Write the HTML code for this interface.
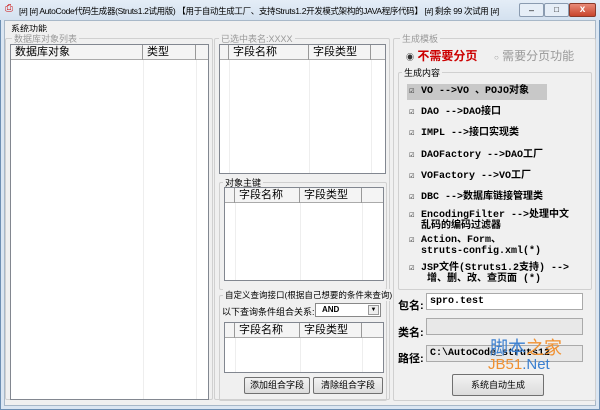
<!DOCTYPE html>
<html><head><meta charset="utf-8"><style>
*{margin:0;padding:0;box-sizing:border-box}
body{width:600px;height:410px;background:#6a9bc4;font-family:"Liberation Sans","Noto Sans CJK SC",sans-serif;font-size:10px;color:#000;position:relative;overflow:hidden}
.a{position:absolute}
.win{left:0;top:0;width:600px;height:410px;background:#dbe6f2;border:1px solid #6d8fb3}
.client{left:4px;top:20px;width:592px;height:386px;background:#f0f0f0;border:1px solid #a8b8c8}
.grp{position:absolute;border:1px solid #d0d0d0;border-radius:2px}
.gl{position:absolute;top:-7px;left:6px;background:#f0f0f0;padding:0 2px;font-size:9px;color:#999;white-space:nowrap}
.tbl{position:absolute;background:#fff;border:1px solid #828790;overflow:hidden}
.hdr{position:absolute;top:0;left:0;right:0;height:15px;background:#f4f4f4;border-bottom:1px solid #aaa}
.hc{position:absolute;top:0;height:15px;border-right:1px solid #999;font-size:11px;padding-left:4px;line-height:14px;white-space:nowrap}
.vl{position:absolute;top:15px;bottom:0;border-left:1px solid #eee}
.btn{position:absolute;border:1px solid #707070;background:linear-gradient(#f2f2f2,#dcdcdc);font-size:9px;text-align:center;line-height:15px;border-radius:2px}
.it{position:absolute;left:10px;font-family:"Liberation Mono","Noto Sans CJK SC",monospace;font-weight:bold;font-size:10px;white-space:nowrap;line-height:11px}
.cb{display:inline-block;width:8px;font-size:9px;margin-right:4px;font-weight:bold;color:#333}
.inp{position:absolute;left:426px;width:157px;height:17px;border:1px solid #aaa;font-family:"Liberation Mono",monospace;font-weight:bold;font-size:10px;padding-left:3px;line-height:15px}
.lab{position:absolute;left:398px;font-size:11px;font-weight:bold}
</style></head><body>
<div class="a win"></div>
<div class="a" style="left:0;top:0;width:600px;height:20px;background:linear-gradient(#e4edf7,#d4e1ef)"></div>
<div class="a" style="left:5px;top:4px;width:10px;height:10px;color:#c00;font-size:10px;line-height:10px">⎙</div>
<div class="a" style="left:19px;top:5px;font-size:8.5px;letter-spacing:-0.35px;white-space:nowrap">[#] [#] AutoCode代码生成器(Struts1.2试用版) 【用于自动生成工厂、支持Struts1.2开发模式架构的JAVA程序代码】 [#] 剩余 99 次试用 [#]</div>
<div class="a" style="left:519px;top:3px;width:25px;height:14px;border:1px solid #8a9bb0;border-radius:2px;background:#e6eef7;text-align:center;font-size:9px;line-height:12px">–</div>
<div class="a" style="left:544px;top:3px;width:25px;height:14px;border:1px solid #8a9bb0;border-radius:2px;background:#e6eef7;text-align:center;font-size:8px;line-height:12px">□</div>
<div class="a" style="left:569px;top:3px;width:27px;height:14px;border:1px solid #8a3a2a;border-radius:2px;background:linear-gradient(#e88a78,#c8452c);color:#fff;text-align:center;font-size:10px;font-weight:bold;line-height:12px">x</div>
<div class="a client"></div>
<div class="a" style="left:5px;top:21px;width:590px;height:12px;background:#f0f0f0"></div>
<div class="a" style="left:11px;top:22px;font-size:9px">系统功能</div>

<!-- left -->
<div class="grp" style="left:5px;top:38px;width:208px;height:362px"><div class="gl">数据库对象列表</div></div>
<div class="tbl" style="left:10px;top:44px;width:199px;height:356px">
<div class="hdr"></div>
<div class="hc" style="left:0;width:132px">数据库对象</div>
<div class="hc" style="left:132px;width:53px">类型</div>
<div class="vl" style="left:132px"></div><div class="vl" style="left:185px"></div>
</div>

<!-- middle top -->
<div class="grp" style="left:214px;top:38px;width:176px;height:362px"></div>
<div class="a" style="left:219px;top:32px;font-size:9px;color:#999;background:#f0f0f0;padding:0 2px">已选中表名:XXXX</div>
<div class="tbl" style="left:219px;top:44px;width:167px;height:130px">
<div class="hdr"></div>
<div class="hc" style="left:0;width:9px"></div>
<div class="hc" style="left:9px;width:80px">字段名称</div>
<div class="hc" style="left:89px;width:62px">字段类型</div>
<div class="vl" style="left:9px"></div><div class="vl" style="left:89px"></div><div class="vl" style="left:151px"></div>
</div>

<div class="grp" style="left:219px;top:182px;width:168px;height:108px"><div class="gl" style="color:#000;left:3px">对象主键</div></div>
<div class="tbl" style="left:224px;top:187px;width:160px;height:94px">
<div class="hdr"></div>
<div class="hc" style="left:0;width:10px"></div>
<div class="hc" style="left:10px;width:65px">字段名称</div>
<div class="hc" style="left:75px;width:62px">字段类型</div>
<div class="vl" style="left:10px"></div><div class="vl" style="left:75px"></div><div class="vl" style="left:137px"></div>
</div>

<div class="grp" style="left:219px;top:295px;width:168px;height:106px"><div class="gl" style="color:#000;left:3px;font-size:8.5px">自定义查询接口(根据自己想要的条件来查询)</div></div>
<div class="a" style="left:222px;top:305px;font-size:9px">以下查询条件组合关系:</div>
<div class="a" style="left:315px;top:303px;width:66px;height:14px;background:#fff;border:1px solid #888;font-size:8px;font-weight:bold;padding-left:6px;line-height:12px">AND<span style="position:absolute;right:1px;top:1px;width:11px;height:10px;border:1px solid #999;background:#eee;font-size:6px;text-align:center;line-height:9px">▼</span></div>
<div class="tbl" style="left:224px;top:322px;width:160px;height:51px">
<div class="hdr"></div>
<div class="hc" style="left:0;width:10px"></div>
<div class="hc" style="left:10px;width:65px">字段名称</div>
<div class="hc" style="left:75px;width:62px">字段类型</div>
<div class="vl" style="left:10px"></div><div class="vl" style="left:75px"></div><div class="vl" style="left:137px"></div>
</div>
<div class="btn" style="left:244px;top:377px;width:66px;height:17px">添加组合字段</div>
<div class="btn" style="left:313px;top:377px;width:70px;height:17px">清除组合字段</div>

<!-- right -->
<div class="grp" style="left:393px;top:38px;width:203px;height:363px"><div class="gl">生成模板</div></div>
<div class="a" style="left:406px;top:47px;font-size:12px;font-weight:bold;color:#c00;white-space:nowrap"><span style="font-size:8px;color:#333">◉</span> 不需要分页</div>
<div class="a" style="left:494px;top:47px;font-size:12px;color:#999;white-space:nowrap"><span style="font-size:8px">○</span> 需要分页功能</div>
<div class="grp" style="left:398px;top:72px;width:194px;height:218px"><div class="gl" style="color:#000;left:3px">生成内容</div>
<div class="a" style="left:8px;top:11px;width:140px;height:16px;background:#c8c8c8"></div>
<div class="it" style="top:13px"><span class="cb">☑</span>VO --&gt;VO 、POJO对象</div>
<div class="it" style="top:34px"><span class="cb">☑</span>DAO --&gt;DAO接口</div>
<div class="it" style="top:55px"><span class="cb">☑</span>IMPL --&gt;接口实现类</div>
<div class="it" style="top:77px"><span class="cb">☑</span>DAOFactory --&gt;DAO工厂</div>
<div class="it" style="top:98px"><span class="cb">☑</span>VOFactory --&gt;VO工厂</div>
<div class="it" style="top:119px"><span class="cb">☑</span>DBC --&gt;数据库链接管理类</div>
<div class="it" style="top:137px"><span class="cb">☑</span>EncodingFilter --&gt;处理中文<br><span class="cb"></span>乱码的编码过滤器</div>
<div class="it" style="top:162px"><span class="cb">☑</span>Action、Form、<br><span class="cb"></span>struts-config.xml(*)</div>
<div class="it" style="top:190px"><span class="cb">☑</span>JSP文件(Struts1.2支持) --&gt;<br><span class="cb"></span> 增、删、改、查页面   (*)</div>
</div>
<div class="lab" style="top:297px">包名:</div>
<div class="inp" style="top:293px;background:#fff">spro.test</div>
<div class="lab" style="top:324px">类名:</div>
<div class="inp" style="top:318px;background:#e8e8e8"></div>
<div class="lab" style="top:350px">路径:</div>
<div class="inp" style="top:345px;background:#e8e8e8">C:\AutoCode_struts12</div>
<div class="a" style="left:490px;top:334px;font-size:18px;color:#3a7fd0;white-space:nowrap">脚本<span style="color:#f09030">之家</span></div>
<div class="a" style="left:488px;top:356px;font-size:15px;color:#3a7fd0;white-space:nowrap"><span style="color:#f09030">JB51</span>.Net</div>
<div class="btn" style="left:452px;top:374px;width:92px;height:22px;line-height:20px">系统自动生成</div>
</body></html>
